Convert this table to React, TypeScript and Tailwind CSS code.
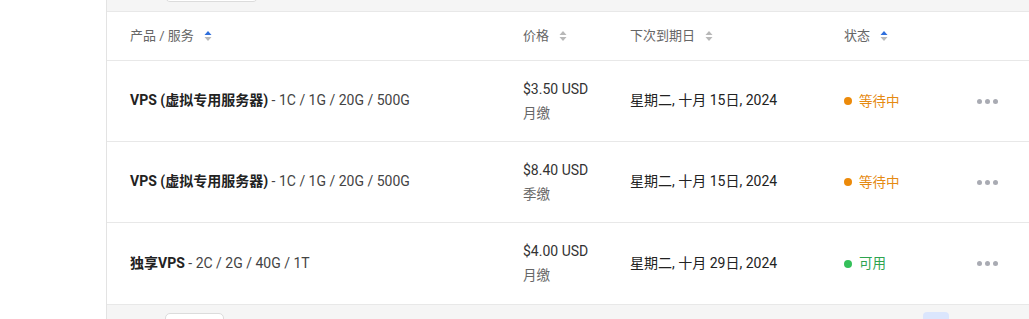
const rows = [
  { name: "VPS (虚拟专用服务器)", spec: "1C / 1G / 20G / 500G", price: "$3.50 USD", cycle: "月缴", date: "星期二, 十月 15日, 2024", status: "pending" },
  { name: "VPS (虚拟专用服务器)", spec: "1C / 1G / 20G / 500G", price: "$8.40 USD", cycle: "季缴", date: "星期二, 十月 15日, 2024", status: "pending" },
  { name: "独享VPS", spec: "2C / 2G / 40G / 1T", price: "$4.00 USD", cycle: "月缴", date: "星期二, 十月 29日, 2024", status: "active" },
];

function SortIcon({ active }: { active?: boolean }) {
  return (
    <svg width="8" height="12" viewBox="0 0 8 12" className="ml-[10px] shrink-0">
      <path d="M4 1 L7.5 5 H0.5 Z" fill={active ? "#2f6fdd" : "#b8b8b8"} />
      <path d="M4 11 L7.5 7 H0.5 Z" fill="#b8b8b8" />
    </svg>
  );
}

function StatusBadge({ status }: { status: string }) {
  if (status === "active") {
    return (
      <div className="flex items-center gap-[7px] text-[13.5px] text-[#2ea44f]">
        <span className="w-[8px] h-[8px] rounded-full bg-[#34c05a]" />
        可用
      </div>
    );
  }
  return (
    <div className="flex items-center gap-[7px] text-[13.5px] text-[#e58a12]">
      <span className="w-[8px] h-[8px] rounded-full bg-[#ec8a0a]" />
      等待中
    </div>
  );
}

export default function App() {
  return (
    <div
      className="flex h-[319px] w-[1029px] overflow-hidden bg-white text-[#333]"
      style={{ fontFamily: "Roboto, 'Noto Sans CJK SC', sans-serif" }}
    >
      <div className="w-[107px] shrink-0 bg-white border-r border-[#e3e3e3]" />
      <div className="flex-1 flex flex-col bg-[#f5f5f5]">
        <div className="h-[11px] shrink-0 overflow-hidden pl-[58px]">
          <div className="w-[93px] h-[30px] -mt-[28px] bg-white border border-[#dcdcdc] rounded-[5px]" />
        </div>

        <div className="bg-white border-y border-[#e8e8e8]">
          <div className="grid grid-cols-[393px_107px_214px_128px_1fr] items-center h-[49px] pl-[23px] text-[13px] text-[#666] border-b border-[#e8e8e8]">
            <div className="flex items-center">产品 / 服务<SortIcon active /></div>
            <div className="flex items-center">价格<SortIcon /></div>
            <div className="flex items-center">下次到期日<SortIcon /></div>
            <div className="flex items-center">状态<SortIcon active /></div>
            <div />
          </div>
          {rows.map((r, i) => (
            <div
              key={i}
              className={`grid grid-cols-[393px_107px_214px_128px_1fr] items-center h-[81px] pl-[23px] ${i < rows.length - 1 ? "border-b border-[#e8e8e8]" : ""}`}
            >
              <div className="text-[14px] -mt-[1px]">
                <span className="font-bold text-[#222]">{r.name}</span>
                <span className="text-[#444]"> - {r.spec}</span>
              </div>
              <div className="leading-[24px] -mt-[1px]">
                <div className="text-[14px] text-[#333]">{r.price}</div>
                <div className="text-[13.5px] text-[#666]">{r.cycle}</div>
              </div>
              <div className="text-[14px] text-[#222] -mt-[1px]">{r.date}</div>
              <StatusBadge status={r.status} />
              <div className="flex gap-[3px] pl-[5px]">
                <span className="w-[5px] h-[5px] rounded-full bg-[#a9abb3]" />
                <span className="w-[5px] h-[5px] rounded-full bg-[#a9abb3]" />
                <span className="w-[5px] h-[5px] rounded-full bg-[#a9abb3]" />
              </div>
            </div>
          ))}
        </div>

        <div className="flex-1 flex items-start pt-[8px] pl-[58px]">
          <div className="w-[59px] h-[20px] bg-white border border-[#dcdcdc] rounded-[5px]" />
          <div className="ml-[699px] -mt-[1px] w-[26px] h-[20px] bg-[#dbe6fd] rounded-[4px]" />
        </div>
      </div>
    </div>
  );
}
